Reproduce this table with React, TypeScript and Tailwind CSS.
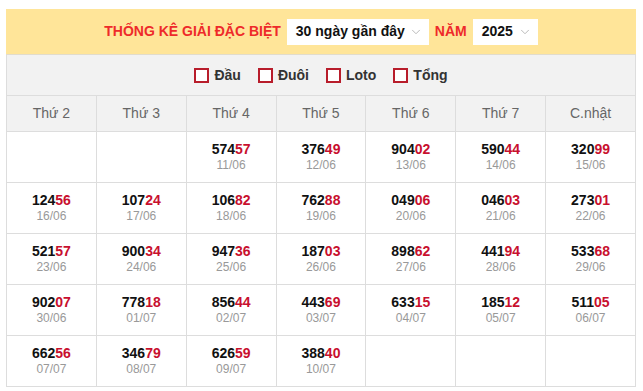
import React from 'react';
import { ChevronDown } from 'lucide-react';

type Cell = { num: string; date: string } | null;

const days = ['Thứ 2', 'Thứ 3', 'Thứ 4', 'Thứ 5', 'Thứ 6', 'Thứ 7', 'C.nhật'];

const rows: Cell[][] = [
  [null, null, { num: '57457', date: '11/06' }, { num: '37649', date: '12/06' }, { num: '90402', date: '13/06' }, { num: '59044', date: '14/06' }, { num: '32099', date: '15/06' }],
  [{ num: '12456', date: '16/06' }, { num: '10724', date: '17/06' }, { num: '10682', date: '18/06' }, { num: '76288', date: '19/06' }, { num: '04906', date: '20/06' }, { num: '04603', date: '21/06' }, { num: '27301', date: '22/06' }],
  [{ num: '52157', date: '23/06' }, { num: '90034', date: '24/06' }, { num: '94736', date: '25/06' }, { num: '18703', date: '26/06' }, { num: '89862', date: '27/06' }, { num: '44194', date: '28/06' }, { num: '53368', date: '29/06' }],
  [{ num: '90207', date: '30/06' }, { num: '77818', date: '01/07' }, { num: '85644', date: '02/07' }, { num: '44369', date: '03/07' }, { num: '63315', date: '04/07' }, { num: '18512', date: '05/07' }, { num: '51105', date: '06/07' }],
  [{ num: '66256', date: '07/07' }, { num: '34679', date: '08/07' }, { num: '62659', date: '09/07' }, { num: '38840', date: '10/07' }, null, null, null],
];

const filters = ['Đầu', 'Đuôi', 'Loto', 'Tổng'];

const Select: React.FC<{ label: string; className?: string }> = ({ label, className = '' }) => (
  <div className={`h-[26px] bg-white flex items-center justify-between pl-[9px] pr-[6px] ${className}`}>
    <span className="text-[14px] font-bold text-[#111]">{label}</span>
    <ChevronDown className="w-[14px] h-[14px] text-[#b0b0b0]" strokeWidth={1.5} />
  </div>
);

export default function App() {
  return (
    <div className="pl-[6px] pt-[9px] bg-white min-h-[391px]" style={{ fontFamily: '"Liberation Sans", Arial, sans-serif' }}>
      <div className="w-[630px]">
        {/* Title bar */}
        <div className="h-[46px] bg-[#ffe599] border-b border-[#e2dccb] flex items-center justify-center gap-[6px]">
          <span className="text-[14px] font-bold text-[#ee2a2a] mr-[0px]">THỐNG KÊ GIẢI ĐẶC BIỆT</span>
          <Select label="30 ngày gần đây" className="w-[142px] ml-[0px]" />
          <span className="text-[14px] font-bold text-[#ee2a2a] mx-[0px]">NĂM</span>
          <Select label="2025" className="w-[65px]" />
        </div>

        {/* Filters */}
        <div className="h-[40px] bg-[#f2f2f2] border-x border-[#dddddd] flex items-center justify-center gap-[17px]">
          {filters.map((f) => (
            <label key={f} className="flex items-center gap-[5px]">
              <span className="w-[15px] h-[15px] border-2 border-[#b81d2b] bg-white" />
              <span className="text-[14px] font-bold text-[#333]">{f}</span>
            </label>
          ))}
        </div>

        {/* Calendar table */}
        <table className="w-[630px] table-fixed border-collapse">
          <thead>
            <tr className="h-[36px] bg-[#f2f2f2]">
              {days.map((d) => (
                <th key={d} className="border border-[#dddddd] text-[14px] font-normal text-[#666]">
                  {d}
                </th>
              ))}
            </tr>
          </thead>
          <tbody>
            {rows.map((row, i) => (
              <tr key={i} className="h-[51px]">
                {row.map((c, j) => (
                  <td key={j} className="border border-[#dddddd] text-center align-middle">
                    {c && (
                      <div className="flex flex-col items-center">
                        <span className="text-[14px] font-bold leading-[16px] text-[#111]">
                          {c.num.slice(0, 3)}
                          <span className="text-[#c8102e]">{c.num.slice(3)}</span>
                        </span>
                        <span className="text-[12px] leading-[16px] text-[#999]">{c.date}</span>
                      </div>
                    )}
                  </td>
                ))}
              </tr>
            ))}
          </tbody>
        </table>
      </div>
    </div>
  );
}
